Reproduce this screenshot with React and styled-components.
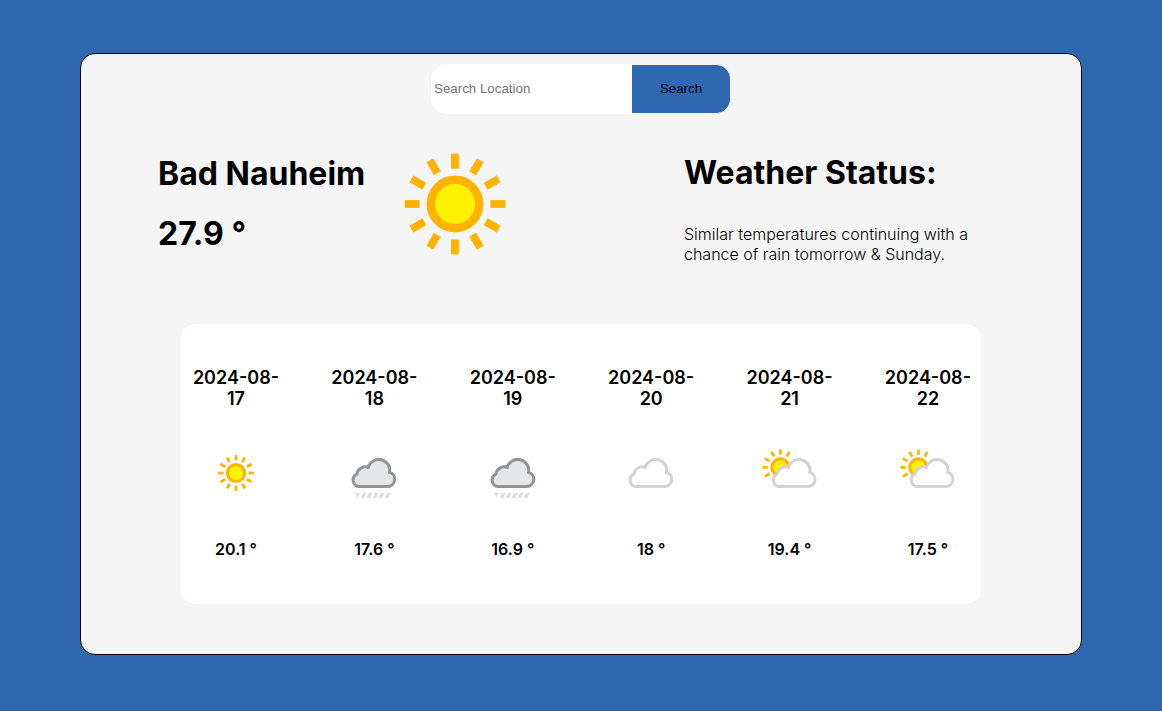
import React from "react";
import styled, { createGlobalStyle } from "styled-components";

const colors = {
  blue: "#3067b1",
  card: "#f5f5f5",
  sun: "#ffb300",
  sunCore: "#fff200",
};

const GlobalStyle = createGlobalStyle`
  *, *::before, *::after { box-sizing: border-box; }
  body {
    margin: 0;
    background: ${colors.blue};
    color: #000;
    font-family: Inter, "Liberation Sans", sans-serif;
    font-size: 16px;
    line-height: 20px;
  }
`;

const Page = styled.main`
  padding: 53px 80px 56px;
`;

const Card = styled.div`
  padding: 10px 0 50px;
  background: ${colors.card};
  border: 1px solid #000;
  border-radius: 15px;
`;

const SearchForm = styled.form`
  display: flex;
  justify-content: center;
  height: 50px;
`;

const SearchInput = styled.input`
  width: 201px;
  padding: 0 3px 2px;
  border: 0;
  border-radius: 15px 0 0 15px;
  background: #fff;
  font-family: "Liberation Sans", Arial, sans-serif;

  &::placeholder { color: #757575; }
`;

const SearchButton = styled.button`
  width: 99px;
  padding: 0 0 2px;
  border: 1px solid ${colors.card};
  border-left: 0;
  border-radius: 0 15px 15px 0;
  background: ${colors.blue};
  color: #000;
  font-family: "Liberation Sans", Arial, sans-serif;
  cursor: pointer;
`;

const Current = styled.section`
  display: flex;
  justify-content: space-between;
  padding: 0 97px 30px 77px;
`;

const Place = styled.div`
  display: flex;
`;

const PlaceText = styled.div`
  display: flex;
  flex-direction: column;
  gap: 20px;
  padding-top: 40px;
`;

const Title = styled.h1`
  margin: 0;
  font-size: 32px;
  line-height: 40px;
  font-weight: 700;
`;

const Status = styled.div`
  width: 300px;
  padding-top: 39px;
`;

const StatusText = styled.p`
  margin: 31px 0 0;
  font-weight: 300;
`;

const Forecast = styled.ul`
  display: flex;
  justify-content: space-between;
  max-width: 800px;
  margin: 0 auto;
  padding: 43px 3px 45px 5px;
  list-style: none;
  background: #fff;
  border-radius: 15px;
`;

const Day = styled.li`
  display: flex;
  flex-direction: column;
  align-items: center;
  width: 100px;
  text-align: center;
`;

const DayDate = styled.h2`
  margin: 0 0 32px;
  font-size: 18px;
  line-height: 21px;
  font-weight: 600;
`;

const DayTemp = styled.p`
  margin: 34px 0 0;
  font-weight: 600;
`;

const Icon = styled.svg`
  display: block;
  flex: none;
  width: ${(p) => p.$size}px;
  height: ${(p) => p.$size}px;
`;

const ALL_RAYS = [0, 30, 60, 90, 120, 150, 180, 210, 240, 270, 300, 330];
const CLOUD =
  "M17 45.5A6.5 6.5 0 0 1 14.8 33.2A8.6 8.6 0 0 1 26.2 26.4A11 11 0 0 1 47.6 31.4A7.2 7.2 0 0 1 45.8 45.5Z";

function Sun({ cx = 32, cy = 32, rays = ALL_RAYS }) {
  return (
    <g transform={`translate(${cx} ${cy})`} stroke={colors.sun}>
      <circle r="8.6" fill={colors.sunCore} strokeWidth="3" />
      {rays.map((a) => (
        <path key={a} d="M0 -12.6V-17.9" strokeWidth="2.8" transform={`rotate(${a})`} />
      ))}
    </g>
  );
}

function Cloud({ dx = 0, fill = "#fff", stroke = "#d1d3d4" }) {
  return (
    <path d={CLOUD} transform={`translate(${dx} 0)`} fill={fill} stroke={stroke} strokeWidth="3" />
  );
}

function WeatherIcon({ kind, size = 64 }) {
  return (
    <Icon $size={size} viewBox="0 0 64 64" role="img" aria-label={kind}>
      {kind === "Sunny" && <Sun />}
      {kind === "Cloudy" && <Cloud />}
      {kind === "Partly cloudy" && (
        <>
          <Sun cx={22.4} cy={26.4} rays={[0, 30, 240, 270, 300, 330]} />
          <Cloud dx={4.2} />
        </>
      )}
      {kind === "Rain" && (
        <>
          <Cloud fill="#e6e7e8" stroke="#929497" />
          <g fill="#dcddde">
            <path d="M13 52H17.8L15.5 57Z" />
            {[0, 1, 2, 3, 4].map((i) => (
              <path key={i} d="M21 52H24.6L22.2 57H18.6Z" transform={`translate(${i * 6} 0)`} />
            ))}
          </g>
        </>
      )}
    </Icon>
  );
}

const days = [
  { date: "2024-08-17", kind: "Sunny", temp: "20.1 °" },
  { date: "2024-08-18", kind: "Rain", temp: "17.6 °" },
  { date: "2024-08-19", kind: "Rain", temp: "16.9 °" },
  { date: "2024-08-20", kind: "Cloudy", temp: "18 °" },
  { date: "2024-08-21", kind: "Partly cloudy", temp: "19.4 °" },
  { date: "2024-08-22", kind: "Partly cloudy", temp: "17.5 °" },
];

export default function App() {
  return (
    <>
      <GlobalStyle />
      <Page>
        <Card>
          <SearchForm role="search" onSubmit={(e) => e.preventDefault()}>
            <SearchInput type="text" placeholder="Search Location" aria-label="Search Location" />
            <SearchButton type="submit">Search</SearchButton>
          </SearchForm>
          <Current>
            <Place>
              <PlaceText>
                <Title>Bad Nauheim</Title>
                <Title as="p">27.9 °</Title>
              </PlaceText>
              <WeatherIcon kind="Sunny" size={180} />
            </Place>
            <Status>
              <Title as="h2">Weather Status:</Title>
              <StatusText>
                Similar temperatures continuing with a chance of rain tomorrow &amp; Sunday.
              </StatusText>
            </Status>
          </Current>
          <Forecast>
            {days.map((day) => (
              <Day key={day.date}>
                <DayDate>{day.date}</DayDate>
                <WeatherIcon kind={day.kind} />
                <DayTemp>{day.temp}</DayTemp>
              </Day>
            ))}
          </Forecast>
        </Card>
      </Page>
    </>
  );
}
